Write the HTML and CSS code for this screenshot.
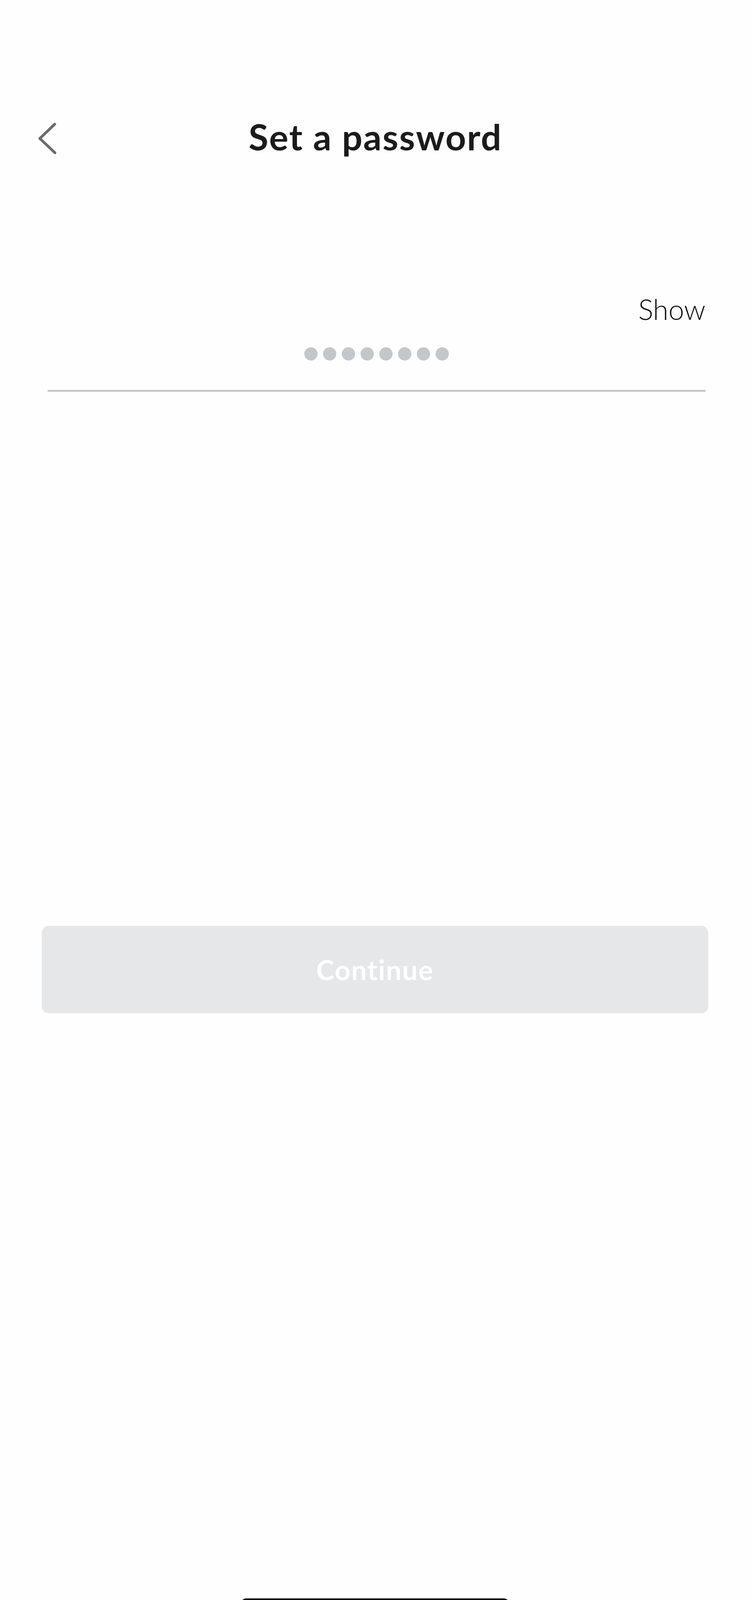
FILE: index.html
```html
<!DOCTYPE html>
<html lang="en">
<head>
<meta charset="utf-8">
<title>Set a password</title>
<link rel="stylesheet" href="styles.css">
</head>
<body>
<div class="screen">
  <header class="header">
    <button class="back" aria-label="Back">
      <svg width="50" height="86" viewBox="0 0 50 86" fill="none">
        <path d="M44 6 L6 42.5 L44.5 79" stroke="#6b6b6b" stroke-width="7" stroke-linecap="round" stroke-linejoin="round"/>
      </svg>
    </button>
    <h1 class="title">Set a password</h1>
    <span class="spacer"></span>
  </header>

  <section class="field">
    <div class="show">Show</div>
    <div class="dots">
      <span class="dot"></span><span class="dot"></span><span class="dot"></span><span class="dot"></span>
      <span class="dot"></span><span class="dot"></span><span class="dot"></span><span class="dot"></span>
    </div>
    <div class="underline"></div>
  </section>

  <div class="actions">
    <button class="continue" disabled>Continue</button>
  </div>

  <div class="home-area">
    <div class="home-indicator"></div>
  </div>
</div>
</body>
</html>
```

FILE: styles.css
```css
* { box-sizing: border-box; }

html, body {
  margin: 0;
  padding: 0;
  background: #ffffff;
}

body {
  font-family: "Lato", "Noto Sans", sans-serif;
  color: #1a1a1a;
  font-variant-ligatures: none;
}

.screen {
  width: 1920px;
  height: 4157px;
  display: flex;
  flex-direction: column;
  background: #fefefe;
}

.header {
  margin-top: 302px;
  height: 92px;
  display: grid;
  grid-template-columns: 1fr auto 1fr;
  align-items: center;
  padding: 0 96px;
}

.back {
  justify-self: start;
  background: none;
  border: 0;
  padding: 0;
  margin-top: 10px;
  width: 50px;
  height: 86px;
  display: flex;
}

.title {
  margin: 0 0 0 2px;
  font-size: 92px;
  line-height: 1;
  font-weight: 700;
  color: #1b1b1b;
  letter-spacing: 2.4px;
}

.field {
  margin-top: 361px;
  padding: 0 114px 0 122px;
  display: flex;
  flex-direction: column;
}

.show {
  align-self: flex-end;
  font-size: 72px;
  line-height: 1;
  font-weight: 300;
  color: #111111;
}

.dots {
  margin-top: 62px;
  display: flex;
  justify-content: center;
  gap: 14px;
}

.dot {
  width: 34px;
  height: 34px;
  border-radius: 50%;
  background: #c3c7ca;
}

.underline {
  margin-top: 75px;
  height: 5px;
  background: #c5c9cb;
}

.actions {
  margin-top: 1367px;
  padding: 0 107px;
}

.continue {
  width: 100%;
  height: 224px;
  border: 0;
  border-radius: 18px;
  background: #e6e7e9;
  color: #ffffff;
  font-family: "Lato", "Noto Sans", sans-serif;
  font-variant-ligatures: none;
  font-size: 70px;
  font-weight: 700;
  letter-spacing: 2px;
  display: flex;
  align-items: center;
  justify-content: center;
}

.home-area {
  margin-top: 1498px;
  display: flex;
  justify-content: center;
}

.home-indicator {
  width: 686px;
  height: 26px;
  border-radius: 13px;
  background: #000000;
}
```
